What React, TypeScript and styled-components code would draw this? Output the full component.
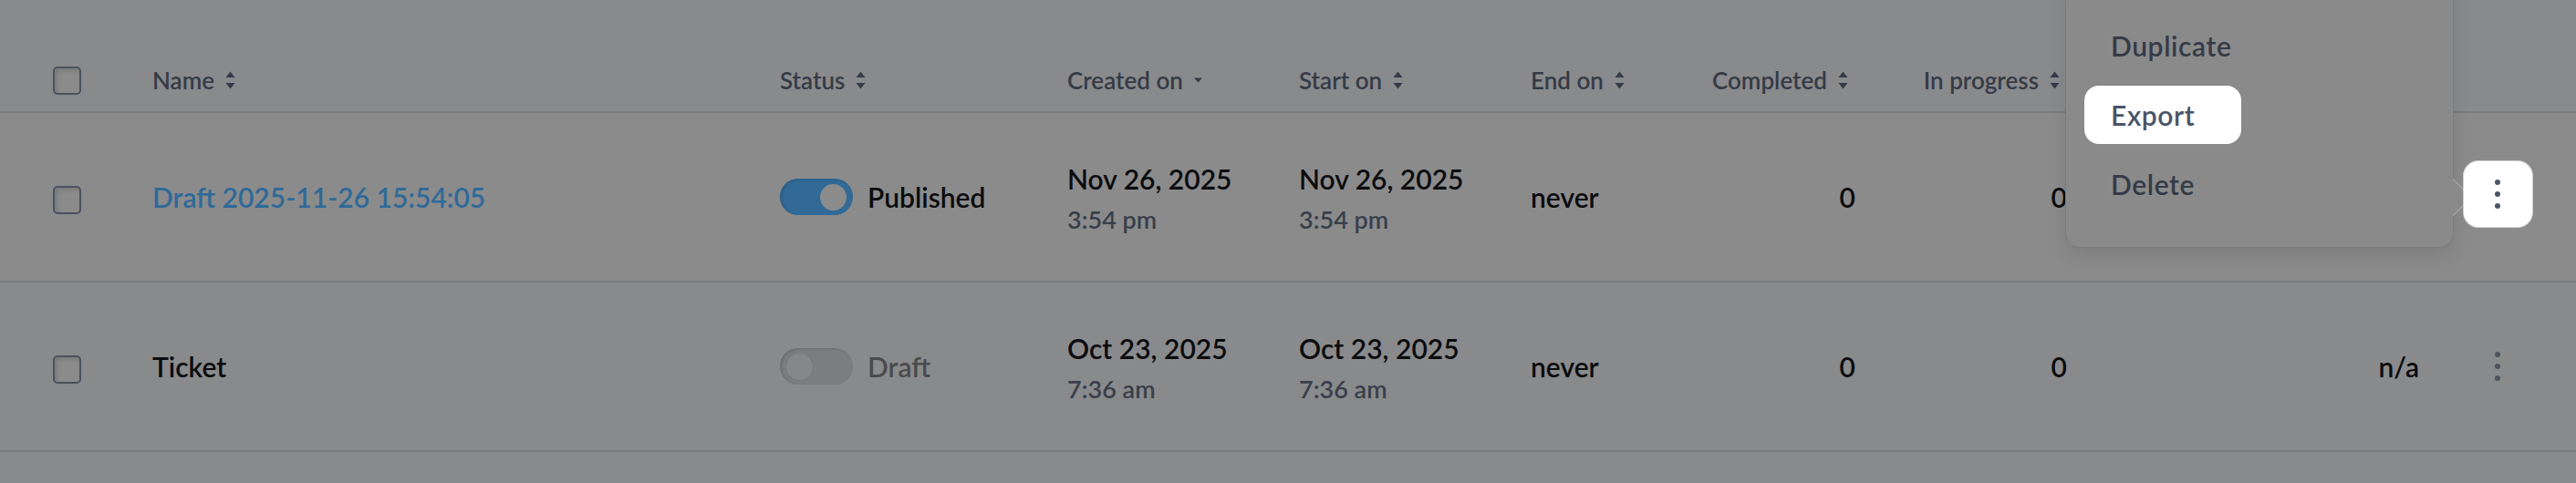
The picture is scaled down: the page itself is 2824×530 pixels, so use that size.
import React from 'react';
import styled, { createGlobalStyle, css } from 'styled-components';

const GlobalStyle = createGlobalStyle`
  html, body { margin: 0; padding: 0; background: #898a8c; }
  body { font-family: Lato, "Noto Sans", sans-serif; }
  *, *::before, *::after { box-sizing: border-box; }
`;

const COLS = '167px 688px 315px 254px 254px 172px 184px 232px 386px 1fr';

const Page = styled.div`
  position: relative;
  width: 2824px;
  height: 530px;
  overflow: hidden;
  background: #898a8c;
`;

const HeaderRow = styled.div`
  display: grid;
  grid-template-columns: ${COLS};
  align-items: center;
  height: 124px;
  padding-top: 54px;
  border-bottom: 2px solid #7a7b7d;
`;

const BodyRow = styled.div<{ $hover?: boolean }>`
  display: grid;
  grid-template-columns: ${COLS};
  align-items: center;
  height: 186px;
  border-bottom: 2px solid #7a7b7d;
  background: ${(p) => (p.$hover ? '#8b8b8c' : 'transparent')};
`;

const HeadCell = styled.div<{ $right?: boolean }>`
  display: flex;
  align-items: center;
  gap: 12px;
  font-size: 26px;
  font-weight: 600;
  color: #353b46;
  white-space: nowrap;
  ${(p) =>
    p.$right &&
    css`
      justify-content: flex-end;
      padding-right: 8px;
    `}
`;

const Cell = styled.div<{ $right?: boolean }>`
  display: flex;
  align-items: center;
  font-size: 30px;
  font-weight: 600;
  color: #0b0c0e;
  white-space: nowrap;
  ${(p) => p.$right && css`justify-content: flex-end;`}
`;

const SelectCell = styled.div<{ $body?: boolean }>`
  display: flex;
  align-items: center;
  padding-left: 58px;
  padding-top: ${(p) => (p.$body ? '6px' : '0')};
`;

const Checkbox = styled.span`
  display: block;
  width: 31px;
  height: 31px;
  border: 2px solid #4a525e;
  border-radius: 5px;
  background: #8b8b8c;
  box-shadow: inset 3px 3px 4px rgba(0, 0, 0, 0.12);
`;

const NameLink = styled.a`
  font-size: 30px;
  font-weight: 600;
  color: #2f6a98;
  text-decoration: none;
`;

const StatusCell = styled.div`
  display: flex;
  align-items: center;
  gap: 16px;
`;

const Track = styled.span<{ $on?: boolean }>`
  display: flex;
  align-items: center;
  justify-content: ${(p) => (p.$on ? 'flex-end' : 'flex-start')};
  width: 80px;
  height: 40px;
  padding: 0 7px;
  border-radius: 20px;
  background: ${(p) => (p.$on ? '#316a97' : '#7c7d7f')};
  box-shadow: inset 2px 1px 3px rgba(0, 0, 0, 0.12);
`;

const Knob = styled.span<{ $on?: boolean }>`
  display: block;
  width: 29px;
  height: 29px;
  border-radius: 50%;
  background: ${(p) => (p.$on ? '#8b8b8c' : '#868789')};
  box-shadow: ${(p) => (p.$on ? 'none' : '0 0 0 1px rgba(0,0,0,0.04)')};
`;

const StatusLabel = styled.span<{ $on?: boolean }>`
  font-size: 30px;
  font-weight: 600;
  color: ${(p) => (p.$on ? '#0b0c0e' : '#4a4b4d')};
`;

const DateCell = styled.div`
  display: flex;
  flex-direction: column;
  gap: 9px;
  padding-top: 4px;
`;

const DateMain = styled.span`
  font-size: 30px;
  font-weight: 600;
  line-height: 36px;
  color: #0b0c0e;
`;

const DateTime = styled.span`
  font-size: 27px;
  font-weight: 600;
  line-height: 36px;
  color: #393f4a;
`;

const ActionCell = styled.div`
  display: flex;
  align-items: center;
  justify-content: center;
`;

const KebabButton = styled.button<{ $active?: boolean }>`
  position: relative;
  z-index: 2;
  display: flex;
  align-items: center;
  justify-content: center;
  border: none;
  padding: 0;
  cursor: pointer;
  color: ${(p) => (p.$active ? '#4b5567' : '#4d5360')};
  ${(p) =>
    p.$active
      ? css`
          width: 75px;
          height: 72px;
          margin-bottom: 6px;
          border-radius: 16px;
          background: #ffffff;
          box-shadow: 0 0 0 1px rgba(255, 255, 255, 0.6);
        `
      : css`
          width: 40px;
          height: 40px;
          background: transparent;
        `}
`;

const Menu = styled.div`
  position: absolute;
  left: 2264px;
  top: -20px;
  z-index: 1;
  width: 426px;
  display: flex;
  flex-direction: column;
  gap: 12px;
  padding: 37px 20px 37px;
  background: #8a8a8b;
  border: 1px solid #7c7c7e;
  border-radius: 16px;
  box-shadow: 0 8px 20px rgba(0, 0, 0, 0.1);
`;

const MenuArrow = styled.span`
  position: absolute;
  right: -15px;
  top: 221px;
  width: 29px;
  height: 29px;
  background: #8a8a8b;
  border-top: 1px solid rgba(255, 255, 255, 0.28);
  border-right: 1px solid rgba(255, 255, 255, 0.28);
  transform: rotate(45deg);
`;

const MenuItem = styled.div<{ $spot?: boolean }>`
  display: flex;
  align-items: center;
  width: fit-content;
  height: 64px;
  padding: 0 29px;
  border-radius: 16px;
  font-size: 30px;
  font-weight: 600;
  letter-spacing: 0.6px;
  color: #353b46;
  ${(p) =>
    p.$spot &&
    css`
      min-width: 172px;
      background: #ffffff;
      color: #4a5468;
    `}
`;

const SortIcon = ({ mode = 'both' }: { mode?: 'both' | 'desc' }) =>
  mode === 'both' ? (
    <svg width="11" height="20" viewBox="0 0 11 20" fill="currentColor">
      <path d="M5.5 0.5 L10.5 7 L0.5 7 Z" strokeLinejoin="round" />
      <path d="M0.5 13 L10.5 13 L5.5 19.5 Z" strokeLinejoin="round" />
    </svg>
  ) : (
    <svg width="9" height="6" viewBox="0 0 9 6" fill="currentColor">
      <path d="M0 0.5 L9 0.5 L4.5 5.5 Z" />
    </svg>
  );

const Dots = () => (
  <svg width="6" height="32" viewBox="0 0 6 32" fill="currentColor">
    <circle cx="3" cy="3" r="3" />
    <circle cx="3" cy="16" r="3" />
    <circle cx="3" cy="29" r="3" />
  </svg>
);

type RowData = {
  name: string;
  link: boolean;
  published: boolean;
  created: [string, string];
  start: [string, string];
  end: string;
  completed: string;
  inProgress: string;
  rate: string;
  hover: boolean;
  menuOpen: boolean;
};

const rows: RowData[] = [
  {
    name: 'Draft 2025-11-26 15:54:05',
    link: true,
    published: true,
    created: ['Nov 26, 2025', '3:54 pm'],
    start: ['Nov 26, 2025', '3:54 pm'],
    end: 'never',
    completed: '0',
    inProgress: '0',
    rate: 'n/a',
    hover: true,
    menuOpen: true,
  },
  {
    name: 'Ticket',
    link: false,
    published: false,
    created: ['Oct 23, 2025', '7:36 am'],
    start: ['Oct 23, 2025', '7:36 am'],
    end: 'never',
    completed: '0',
    inProgress: '0',
    rate: 'n/a',
    hover: false,
    menuOpen: false,
  },
];

export default function App() {
  return (
    <>
      <GlobalStyle />
      <Page>
        <HeaderRow>
          <SelectCell>
            <Checkbox />
          </SelectCell>
          <HeadCell>
            Name <SortIcon />
          </HeadCell>
          <HeadCell>
            Status <SortIcon />
          </HeadCell>
          <HeadCell>
            Created on <SortIcon mode="desc" />
          </HeadCell>
          <HeadCell>
            Start on <SortIcon />
          </HeadCell>
          <HeadCell>
            End on <SortIcon />
          </HeadCell>
          <HeadCell $right>
            Completed <SortIcon />
          </HeadCell>
          <HeadCell $right>
            In progress <SortIcon />
          </HeadCell>
          <HeadCell $right>
            Completion rate <SortIcon />
          </HeadCell>
          <HeadCell />
        </HeaderRow>
        {rows.map((r) => (
          <BodyRow key={r.name} $hover={r.hover}>
            <SelectCell $body>
              <Checkbox />
            </SelectCell>
            <Cell>{r.link ? <NameLink href="#">{r.name}</NameLink> : r.name}</Cell>
            <StatusCell>
              <Track $on={r.published}>
                <Knob $on={r.published} />
              </Track>
              <StatusLabel $on={r.published}>{r.published ? 'Published' : 'Draft'}</StatusLabel>
            </StatusCell>
            <DateCell>
              <DateMain>{r.created[0]}</DateMain>
              <DateTime>{r.created[1]}</DateTime>
            </DateCell>
            <DateCell>
              <DateMain>{r.start[0]}</DateMain>
              <DateTime>{r.start[1]}</DateTime>
            </DateCell>
            <Cell>{r.end}</Cell>
            <Cell $right>{r.completed}</Cell>
            <Cell $right>{r.inProgress}</Cell>
            <Cell $right>{r.rate}</Cell>
            <ActionCell>
              <KebabButton $active={r.menuOpen} aria-label="More actions">
                <Dots />
              </KebabButton>
            </ActionCell>
          </BodyRow>
        ))}
        <Menu role="menu">
          <MenuItem>Duplicate</MenuItem>
          <MenuItem $spot>Export</MenuItem>
          <MenuItem>Delete</MenuItem>
          <MenuArrow />
        </Menu>
      </Page>
    </>
  );
}
